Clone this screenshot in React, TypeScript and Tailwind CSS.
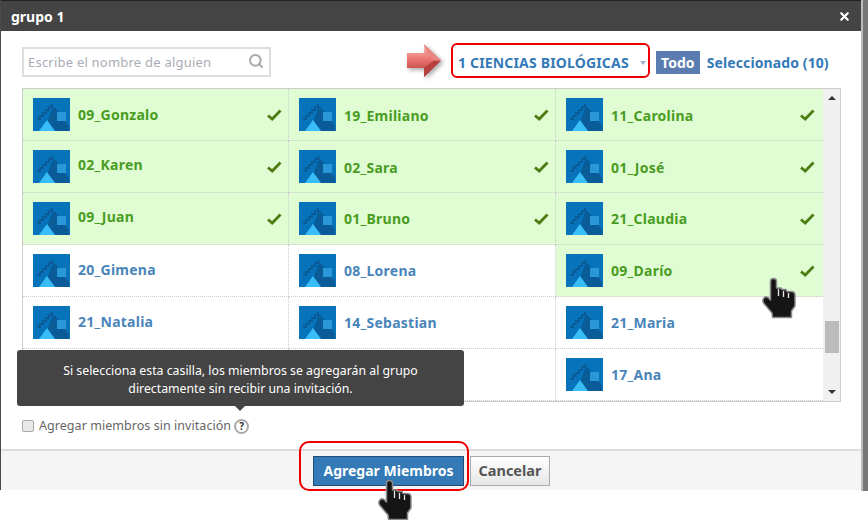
import { Search, X } from "lucide-react";

type Member = { name: string; on?: boolean; nudge?: string };

const members: Member[] = [
  { name: "09_Gonzalo", on: true, nudge: "-mt-[1px]" },
  { name: "19_Emiliano", on: true, nudge: "mt-[1px]" },
  { name: "11_Carolina", on: true, nudge: "mt-[1px]" },
  { name: "02_Karen", on: true, nudge: "-mt-[4px]" },
  { name: "02_Sara", on: true, nudge: "mt-[1px]" },
  { name: "01_José", on: true, nudge: "mt-[1px]" },
  { name: "09_Juan", on: true, nudge: "-mt-[4px]" },
  { name: "01_Bruno", on: true },
  { name: "21_Claudia", on: true },
  { name: "20_Gimena", nudge: "-mt-[3px]" },
  { name: "08_Lorena", nudge: "-mt-[1px]" },
  { name: "09_Darío", on: true },
  { name: "21_Natalia", nudge: "-mt-[3px]" },
  { name: "14_Sebastian" },
  { name: "21_Maria" },
  { name: "" },
  { name: "" },
  { name: "17_Ana", nudge: "-mt-[1px]" },
];

const Avatar = () => (
  <svg width="37" height="33" viewBox="0 0 37 33" className="shrink-0">
    <rect width="37" height="33" fill="#0673ba" />
    <path d="M20 8 L24 12 L36 28 L36 33 L11 33 Z" fill="#0a5c99" />
    <path d="M4 21 L7 21 L7 18 L10 18 L10 15 L13 15 L13 12 L16 12 L16 9 L19 9 L19 6" fill="none" stroke="#0a5c99" strokeWidth="2" />
    <rect x="24" y="14" width="9" height="9" fill="#2a97d8" />
    <path d="M6 33 L14 22 L22 33 Z" fill="#38bdf8" />
  </svg>
);

const Check = () => (
  <svg width="15" height="12" viewBox="0 0 15 12" className="shrink-0">
    <path d="M1 6.5 L5.2 10 L13.5 1.5" fill="none" stroke="#4b7d14" strokeWidth="2.8" />
  </svg>
);

const Hand = ({ className }: { className: string }) => (
  <svg width="34" height="42" viewBox="0 0 34 42" className={className}>
    <path
      d="M8.5 4 C8.5 0.5 14.5 0.5 14.5 4 L14.5 11 L19 11 L20 12.5 L24 12.5 L25 14.5 L29 14.5 C31.5 14.5 33 16 33 18 L33 29 L29.5 34 L29.5 40.5 L10.5 40.5 L10 36 L1.5 26 C-0.5 22 3 18.5 6 20.5 L8.5 23 Z"
      fill="#151515"
      stroke="#8a8a8a"
      strokeWidth="1.5"
      strokeLinejoin="round"
    />
    <path d="M16.5 12 V19 M21.5 14 V20 M26.5 16 V21" stroke="#e8e8e8" strokeWidth="1.3" />
  </svg>
);

export default function App() {
  return (
    <div className="h-[520px] w-[868px] overflow-hidden bg-white font-['Noto_Sans',sans-serif] relative">
      <div className="flex h-[491px] w-[868px]">
        <div className="flex h-[490px] w-[861px] shrink-0 flex-col border-l-[1px] border-[#4a4a4a] bg-white">
          {/* cabecera */}
          <div className="flex h-[31px] shrink-0 items-center justify-between border-t-[1px] border-[#222] bg-[#444] pr-[10px] pl-[10px] text-white">
            <span className="text-[14px] font-bold">grupo 1</span>
            <X size={13} strokeWidth={4} />
          </div>

          {/* cuerpo */}
          <div className="flex flex-1 flex-col pl-[21px]">
            <div className="mt-[16px] flex h-[30px] items-center">
              <div className="flex h-[30px] w-[249px] items-center justify-between border-2 border-[#ddd] pr-[5px] pl-[4px]">
                <span className="mt-[1px] text-[13px] tracking-[0.22px] text-[#a9adb5]">Escribe el nombre de alguien</span>
                <Search size={16} strokeWidth={3} className="mb-[3px] text-[#aaa]" />
              </div>
              <span className="mt-[1px] ml-[187px] text-[14px] font-bold tracking-[0.17px] whitespace-nowrap text-[#337ab7]">1 CIENCIAS BIOLÓGICAS</span>
              <span className="mt-[2px] ml-[11px] h-0 w-0 border-x-[3.5px] border-t-[4px] border-x-transparent border-t-[#9db4cc]" />
              <span className="mt-[1px] ml-[10px] flex h-[23px] w-[44px] items-center justify-center bg-[#5a7cb0] text-[14px] font-bold text-white">Todo</span>
              <span className="mt-[1px] ml-[7px] text-[14px] font-bold tracking-[0.1px] whitespace-nowrap text-[#337ab7]">Seleccionado (10)</span>
            </div>

            {/* lista de miembros */}
            <div className="mt-[11px] flex h-[314px] w-[819px] border border-[#ccc]">
              <div className="grid flex-1 grid-cols-[266px_267px_267px] grid-rows-[repeat(6,52px)]">
                {members.map((m, i) => (
                  <div
                    key={i}
                    className={`flex items-center border-b border-dotted border-[#ccc] pl-[10px] ${i % 3 < 2 ? "border-r pr-[6px]" : "pr-[8px]"} ${m.on ? "bg-[#e0fcd2]" : "bg-white"}`}
                  >
                    {m.name && <Avatar />}
                    <span className={`ml-[8px] flex-1 text-[14px] font-bold tracking-[0.25px] ${m.nudge ?? ""} ${m.on ? "text-[#4a9c22]" : "text-[#4a85ba]"}`}>{m.name}</span>
                    {m.on && <Check />}
                  </div>
                ))}
              </div>
              <div className="flex w-[17px] shrink-0 flex-col items-center bg-[#f0f0f0] pt-[7px] pb-[7px]">
                <span className="h-0 w-0 border-x-[4px] border-b-[4px] border-x-transparent border-b-[#333]" />
                <span className="mt-[221px] h-[32px] w-[14px] bg-[#bcbcbc]" />
                <span className="mt-auto h-0 w-0 border-x-[4px] border-t-[4px] border-x-transparent border-t-[#333]" />
              </div>
            </div>

            <div className="mt-[15px] flex h-[18px] items-center">
              <span className="h-[12px] w-[12px] rounded-[2px] border border-[#aaa] bg-[#e8e8e8]" />
              <span className="ml-[5px] text-[12.5px] tracking-[0.05px] text-[#666]">Agregar miembros sin invitación</span>
              <span className="ml-[3px] flex h-[15px] w-[15px] items-center justify-center rounded-full border-2 border-[#aaa] text-[10px] font-bold text-[#333]">?</span>
            </div>
          </div>

          {/* pie */}
          <div className="flex h-[41px] shrink-0 items-center border-t-2 border-[#ddd] bg-[#f5f5f5] pt-[1px] pl-[312px]">
            <button className="h-[30px] w-[151px] border border-[#1f4e79] bg-[#337ab7] pb-[2px] text-[14px] font-bold text-white">Agregar Miembros</button>
            <button className="ml-[6px] h-[30px] w-[80px] border border-[#aaa] bg-gradient-to-b from-white to-[#e6e6e6] text-[14.5px] font-bold text-[#555]">Cancelar</button>
          </div>
        </div>
        <div className="w-[2px] bg-[#bbb]" />
        <div className="w-[5px] bg-[#777]" />
      </div>

      {/* aviso */}
      <div className="absolute top-[350px] left-[17px] flex h-[56px] w-[447px] flex-col items-center justify-center rounded-[3px] bg-[#444] pt-[3px] text-[12.3px] leading-[18px] text-white">
        <span>Si selecciona esta casilla, los miembros se agregarán al grupo</span>
        <span>directamente sin recibir una invitación.</span>
        <span className="absolute top-full left-[218px] h-0 w-0 border-x-[5px] border-t-[5px] border-x-transparent border-t-[#444]" />
      </div>

      {/* marcas de la captura */}
      <div className="absolute top-[43px] left-[451px] h-[35px] w-[199px] rounded-[6px] border-2 border-[#ee0000]" />
      <div className="absolute top-[441px] left-[299px] h-[50px] w-[170px] rounded-[10px] border-2 border-[#ee0000]" />
      <svg width="38" height="38" viewBox="0 0 38 38" className="absolute top-[43px] left-[406px] drop-shadow-[2px_2px_2px_rgba(0,0,0,0.35)]">
        <defs>
          <linearGradient id="flecha" x1="0" y1="0" x2="0" y2="1">
            <stop offset="0" stopColor="#fbc4be" />
            <stop offset="0.5" stopColor="#e8706c" />
            <stop offset="1" stopColor="#a83533" />
          </linearGradient>
        </defs>
        <path d="M1 10 L18 10 L18 1 L35 17.5 L18 34 L18 25 L1 25 Z" fill="url(#flecha)" />
        <path d="M18 25 L18 34 L35 17.5 L28 17.5 Z" fill="#b5403e" />
        <path d="M18 1 L35 17.5 L28 17.5 L21 10 Z" fill="#e88682" />
      </svg>
      <Hand className="absolute top-[277px] left-[762px]" />
      <Hand className="absolute top-[479px] left-[378px]" />
    </div>
  );
}
